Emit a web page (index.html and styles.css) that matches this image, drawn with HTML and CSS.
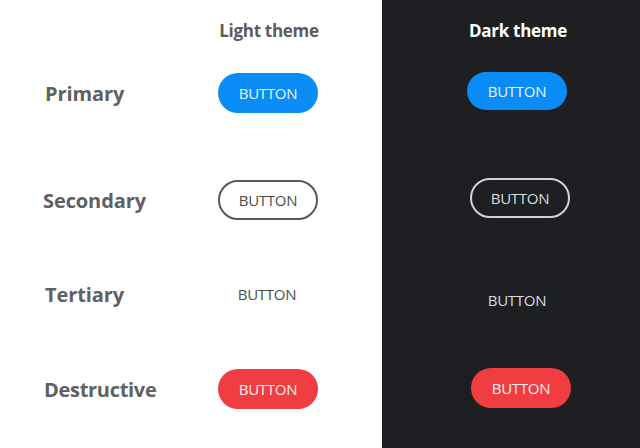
FILE: index.html
```html
<!DOCTYPE html>
<html>
<head>
<meta charset="utf-8">
<link rel="stylesheet" href="styles.css">
</head>
<body>
<div class="page">
  <section class="panel light">
    <div class="cell"></div>
    <div class="cell head">Light theme</div>
    <div class="cell label">Primary</div>
    <div class="cell"><span class="btn primary">BUTTON</span></div>
    <div class="cell label secondary-label">Secondary</div>
    <div class="cell"><span class="btn secondary">BUTTON</span></div>
    <div class="cell label">Tertiary</div>
    <div class="cell"><span class="btn tertiary">BUTTON</span></div>
    <div class="cell label destructive-label">Destructive</div>
    <div class="cell"><span class="btn destructive">BUTTON</span></div>
  </section>
  <section class="panel dark">
    <div class="cell head">Dark theme</div>
    <div class="cell"><span class="btn primary">BUTTON</span></div>
    <div class="cell"><span class="btn secondary">BUTTON</span></div>
    <div class="cell"><span class="btn tertiary">BUTTON</span></div>
    <div class="cell"><span class="btn destructive">BUTTON</span></div>
  </section>
</div>
</body>
</html>
```
FILE: styles.css
```css
html, body {
  margin: 0;
  padding: 0;
  width: 640px;
  height: 448px;
  overflow: hidden;
}
body {
  font-family: "Open Sans", "Noto Sans", sans-serif;
}
.page {
  display: flex;
  width: 640px;
  height: 448px;
}
.panel {
  display: grid;
  height: 448px;
}
.light {
  width: 382px;
  background: #ffffff;
  grid-template-columns: 190px 156px;
  grid-template-rows: 60px 66px 148px 40px 150px;
}
.dark {
  flex: 1;
  background: #1e1f22;
  grid-template-columns: 1fr;
  grid-template-rows: 60px 62px 152px 52px 124px;
  padding-left: 12px;
}
.cell {
  display: flex;
  align-items: center;
  justify-content: center;
}
.head {
  font-size: 17px;
  font-weight: 700;
  color: #5b5c60;
  letter-spacing: -0.3px;
}
.light .head {
  padding-left: 2px;
}
.dark .head {
  color: #ffffff;
  padding-left: 2px;
}
.label {
  justify-content: flex-start;
  padding-left: 45px;
  font-size: 20px;
  font-weight: 700;
  color: #5f6064;
  letter-spacing: -0.1px;
}
.secondary-label {
  padding-left: 43px;
}
.destructive-label {
  padding-left: 44px;
  letter-spacing: -0.3px;
}
.btn {
  box-sizing: border-box;
  display: flex;
  align-items: center;
  justify-content: center;
  width: 100px;
  height: 40px;
  border-radius: 20px;
  font-size: 15px;
  letter-spacing: -0.3px;
}
.primary {
  background: #0a8cf6;
  color: #eaf5ff;
}
.secondary {
  border: 2px solid #56575b;
  color: #4a4b4f;
}
.tertiary {
  color: #4a4b4f;
}
.light .tertiary {
  margin-left: -2px;
}
.destructive {
  background: #ef3d42;
  color: #fff0f0;
}
.dark .primary {
  height: 38px;
}
.dark .secondary {
  border-color: #d2d2d4;
  color: #dcdcde;
  margin-left: 6px;
}
.dark .tertiary {
  color: #dcdcde;
}
.dark .destructive {
  margin-left: 8px;
}
```
